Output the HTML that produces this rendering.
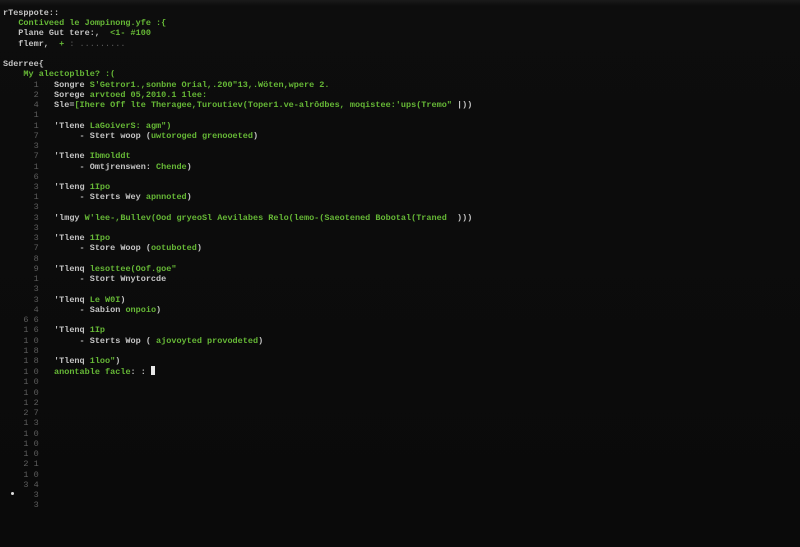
<!DOCTYPE html>
<html><head><meta charset="utf-8"><style>
html,body{margin:0;padding:0;background:#0b0b0b;width:800px;height:547px;overflow:hidden}
body{background:linear-gradient(#1a1a1a 0,#0d0d0d 6px,#0a0a0a 100%)}
pre{position:absolute;left:3px;top:8px;margin:0;font-family:"Liberation Mono",monospace;font-size:8.5px;line-height:10.23px;color:#c4c4c4;font-weight:bold;white-space:pre}
.g{color:#66b836}.n{color:#5e5e5e;font-weight:normal}
.cur{display:inline-block;width:4px;height:9px;background:#e8e8e8;vertical-align:-1px}
.dot{position:absolute;left:11px;top:492px;width:3px;height:3px;border-radius:50%;background:#ddd}
</style></head><body>
<pre>rTesppote::
   <span class="g">Contiveed le Jompinong.yfe :{</span>
   Plane Gut tere:,  <span class="g">&lt;1- #100</span>
   flemr,  <span class="g">+</span> <span class="n">: .........</span>

Sderree{
    <span class="g">My alectoplble? :(</span>
<span class="n">      1</span>   Songre <span class="g">S'Getror1.,sonbne Orial,.200"13,.Wöten,wpere 2.</span>
<span class="n">      2</span>   Sorege <span class="g">arvtoed 05,2010.1 1lee:</span>
<span class="n">      4</span>   Sle=<span class="g">[Ihere Off lte Theragee,Turoutiev(Toper1.ve-alrôdbes, moqistee:'ups(Tremo" </span>|))
<span class="n">      1</span>
<span class="n">      1</span>   'Tlene <span class="g">LaGoiverS: agm")</span>
<span class="n">      7</span>        - Stert woop (<span class="g">uwtoroged grenooeted</span>)
<span class="n">      3</span>
<span class="n">      7</span>   'Tlene <span class="g">Ibmolddt</span>
<span class="n">      1</span>        - Omtjrenswen: <span class="g">Chende</span>)
<span class="n">      6</span>
<span class="n">      3</span>   'Tleng <span class="g">1Ipo</span>
<span class="n">      1</span>        - Sterts Wey <span class="g">apnnoted</span>)
<span class="n">      3</span>
<span class="n">      3</span>   'lmgy <span class="g">W'lee-,Bullev(Ood gryeoSl Aevilabes Relo(lemo-(Saeotened Bobotal(Traned</span>  )))
<span class="n">      3</span>
<span class="n">      3</span>   'Tlene <span class="g">1Ipo</span>
<span class="n">      7</span>        - Store Woop (<span class="g">ootuboted</span>)
<span class="n">      8</span>
<span class="n">      9</span>   'Tlenq <span class="g">lesottee(Oof.goe"</span>
<span class="n">      1</span>        - Stort Wnytorcde
<span class="n">      3</span>
<span class="n">      3</span>   'Tlenq <span class="g">Le W0I</span>)
<span class="n">      4</span>        - Sabion <span class="g">onpoio</span>)
<span class="n">    6 6</span>
<span class="n">    1 6</span>   'Tlenq <span class="g">1Ip</span>
<span class="n">    1 0</span>        - Sterts Wop ( <span class="g">ajovoyted provodeted</span>)
<span class="n">    1 8</span>
<span class="n">    1 8</span>   'Tlenq <span class="g">1loo"</span>)
<span class="n">    1 0</span>   <span class="g">anontable facle</span>: : <span class="cur"></span>
<span class="n">    1 0</span>
<span class="n">    1 0</span>
<span class="n">    1 2</span>
<span class="n">    2 7</span>
<span class="n">    1 3</span>
<span class="n">    1 0</span>
<span class="n">    1 0</span>
<span class="n">    1 0</span>
<span class="n">    2 1</span>
<span class="n">    1 0</span>
<span class="n">    3 4</span>
<span class="n">      3</span>
<span class="n">      3</span></pre>
<div class="dot"></div>
</body></html>
